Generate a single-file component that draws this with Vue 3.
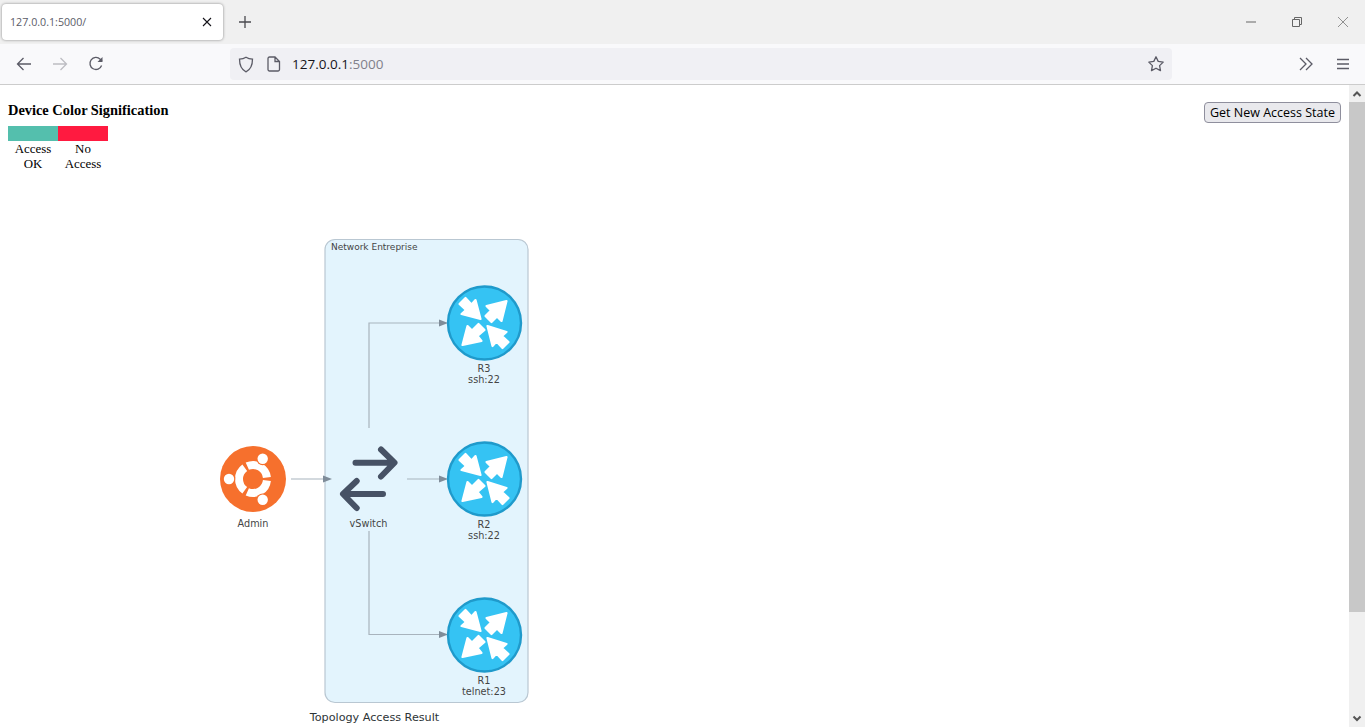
<template>
  <div class="browser">
    <div class="tabbar">
      <div class="tab">
        <span class="tab-title">127.0.0.1:5000/</span>
        <svg class="ico tab-close" width="12" height="12" viewBox="0 0 12 12">
          <path d="M2 2l8 8M10 2l-8 8" stroke="#15141a" stroke-width="1.1" fill="none" />
        </svg>
      </div>
      <svg class="ico new-tab" width="14" height="14" viewBox="0 0 14 14">
        <path d="M7 1v12M1 7h12" stroke="#4a4a4f" stroke-width="1.3" fill="none" />
      </svg>
      <div class="win-controls">
        <svg width="12" height="12" viewBox="0 0 12 12">
          <path d="M1 6h10" stroke="#666" stroke-width="1" fill="none" />
        </svg>
        <svg width="12" height="12" viewBox="0 0 12 12">
          <path d="M1.500 3.500h7v7h-7zM3.500 3.500v-2h7v7h-2" stroke="#666" stroke-width="1" fill="none" />
        </svg>
        <svg width="12" height="12" viewBox="0 0 12 12">
          <path d="M1 1l10 10M11 1L1 11" stroke="#777" stroke-width="0.8" fill="none" />
        </svg>
      </div>
    </div>

    <div class="toolbar">
      <div class="nav-btns">
        <svg width="16" height="16" viewBox="0 0 16 16">
          <path d="M15 8H1.500M7.500 2L1.500 8l6 6" stroke="#5b5b66" stroke-width="1.300" fill="none" />
        </svg>
        <svg width="16" height="16" viewBox="0 0 16 16">
          <path d="M1 8h13.500M8.500 2l6 6-6 6" stroke="#bdbdc2" stroke-width="1.300" fill="none" />
        </svg>
        <svg width="16" height="16" viewBox="0 0 16 16">
          <path d="M13.600 9.500A6 6 0 1 1 12.200 3.200L14 5" stroke="#5b5b66" stroke-width="1.300" fill="none" />
          <path d="M14.500 1v5h-5z" fill="#5b5b66" />
        </svg>
      </div>
      <div class="urlbar">
        <svg class="shield" width="16" height="17" viewBox="0 0 16 17">
          <path d="M8 1.200c2 1.300 4 1.800 6.500 1.900 0 6.500-1.500 10.500-6.500 12.700C3 13.600 1.500 9.600 1.500 3.100 4 3 6 2.500 8 1.200z" stroke="#5b5b66" stroke-width="1.300" fill="none" />
        </svg>
        <svg class="page-ico" width="14" height="16" viewBox="0 0 14 16">
          <path d="M2.500 1h5.500l4.500 4.500v8a1.500 1.500 0 0 1-1.500 1.500H2.500A1.500 1.500 0 0 1 1 13.500v-11A1.500 1.500 0 0 1 2.500 1zM8 1v4.500h4.500" stroke="#5b5b66" stroke-width="1.300" fill="none" />
        </svg>
        <span class="url">127.0.0.1<span class="url-port">:5000</span></span>
        <svg class="star" width="18" height="18" viewBox="0 0 18 18">
          <path d="M9 1.800l2.200 4.600 5 .7-3.600 3.500.9 5L9 13.200l-4.500 2.400.9-5L1.800 7.100l5-.7z" stroke="#5b5b66" stroke-width="1.300" stroke-linejoin="round" fill="none" />
        </svg>
      </div>
      <div class="tool-end">
        <svg width="14" height="14" viewBox="0 0 14 14">
          <path d="M1 1l6 6-6 6M7 1l6 6-6 6" stroke="#5b5b66" stroke-width="1.300" fill="none" />
        </svg>
        <svg width="14" height="14" viewBox="0 0 14 14">
          <path d="M1 2.500h12M1 7h12M1 11.500h12" stroke="#5b5b66" stroke-width="1.300" fill="none" />
        </svg>
      </div>
    </div>

    <div class="viewport">
      <div class="page">
        <div class="page-head">
          <div class="legend">
            <div class="legend-title">Device Color Signification</div>
            <div class="legend-row">
              <div v-for="item in legend" :key="item.label" class="legend-item">
                <div class="swatch" :style="{ background: item.color }"></div>
                <div class="legend-label">{{ item.label }}</div>
              </div>
            </div>
          </div>
          <button class="refresh">Get New Access State</button>
        </div>

        <svg class="topology" width="340" height="497" viewBox="200 230 340 497">
          <defs>
            <g id="router">
              <circle r="36.500" fill="#35c3f3" stroke="#1f9acb" stroke-width="2.400" />
              <g fill="#fff" stroke="#fff" stroke-width="2.200" stroke-linejoin="round">
                <path d="M-4 -4L-9 -23L-13 -18.500L-19 -25L-25 -19L-18.500 -13L-23 -9z" />
                <path d="M22 -22L17 -2L12.500 -6.500L7 -1L1 -7L6.500 -12.500L2 -17z" />
                <path d="M-22 22L-17 3L-12.500 7.500L-6 1L0 7L-7 13L-3 18z" />
                <path d="M3 3L22 9L17.500 13L24 19L18 25L12 18.500L8 23z" />
              </g>
            </g>
            <path id="head" d="M0 0l-9 -3.500v7z" fill="#7f8c99" />
          </defs>

          <rect x="325" y="239.500" width="203" height="463" rx="10" class="cluster" />
          <text x="331" y="249.500" class="lbl cluster-lbl">Network Entreprise</text>

          <path d="M291 479H325M407 479H440M369 428V323H440M369 531V634.500H440" class="edge" />
          <use href="#head" x="332" y="479" />
          <use href="#head" x="448" y="479" />
          <use href="#head" x="448" y="323" />
          <use href="#head" x="448" y="634.500" />

          <!-- ubuntu -->
          <circle cx="253" cy="479" r="33" fill="#f6702d" />
          <g fill="none" stroke="#fff" stroke-width="8">
            <path d="M247.310 466.210A14 14 0 0 1 266.920 477.540" />
            <path d="M266.920 480.460A14 14 0 0 1 247.310 491.790" />
            <path d="M244.770 490.330A14 14 0 0 1 244.770 467.670" />
          </g>
          <g fill="#f6702d">
            <circle cx="262.700" cy="458.800" r="6.400" />
            <circle cx="262.700" cy="499.800" r="6.400" />
            <circle cx="229" cy="479" r="6.400" />
          </g>
          <g fill="#fff">
            <circle cx="262.700" cy="458.800" r="5.200" />
            <circle cx="262.700" cy="499.800" r="5.200" />
            <circle cx="229" cy="479" r="5.200" />
          </g>
          <text x="253" y="527" class="lbl mid">Admin</text>

          <!-- vswitch -->
          <g fill="none" stroke="#475265" stroke-width="6" stroke-linecap="round" stroke-linejoin="round">
            <path d="M355.500 462.700H394M381 449.500L394.500 462.700L381 476.500" />
            <path d="M383 494H343.500M356.700 481L343 494L356.700 508" />
          </g>
          <text x="368.500" y="527" class="lbl mid">vSwitch</text>

          <use v-for="r in routers" :key="r.name" href="#router" x="484.500" :y="r.y" />
          <template v-for="r in routers" :key="r.name + 't'">
            <text x="484" :y="r.y + 49" class="lbl mid">{{ r.name }}</text>
            <text x="484" :y="r.y + 60" class="lbl mid">{{ r.port }}</text>
          </template>

          <text x="374.500" y="721" class="caption mid">Topology Access Result</text>
        </svg>
      </div>

      <div class="scrollbar">
        <svg width="16" height="17" viewBox="0 0 16 17">
          <path d="M4.500 11L8 7.500l3.500 3.500" stroke="#555" stroke-width="2" fill="none" />
        </svg>
        <div class="thumb"></div>
        <div class="track"></div>
        <svg width="16" height="17" viewBox="0 0 16 17">
          <path d="M4.500 6.500L8 10l3.500-3.500" stroke="#555" stroke-width="2" fill="none" />
        </svg>
      </div>
    </div>
  </div>
</template>

<script setup>
const legend = [
  { label: 'Access OK', color: '#54bfad' },
  { label: 'No Access', color: '#ff1a40' }
];

const routers = [
  { name: 'R3', port: 'ssh:22', y: 323 },
  { name: 'R2', port: 'ssh:22', y: 479 },
  { name: 'R1', port: 'telnet:23', y: 635 }
];
</script>

<style scoped>
.browser {
  display: flex;
  flex-direction: column;
  height: 727px;
  overflow: hidden;
  background: #fff;
}

.tabbar {
  display: flex;
  align-items: center;
  height: 44px;
  flex: none;
  background: #f0f0f0;
}

.tab {
  display: flex;
  align-items: center;
  justify-content: space-between;
  align-self: flex-start;
  box-sizing: border-box;
  width: 221px;
  height: 36px;
  margin: 4px 0 0 2px;
  padding: 0 10px 0 8px;
  background: #fff;
  border-radius: 4px;
  box-shadow: 0 0 3px rgba(0, 0, 0, 0.45);
}

.tab-title {
  font: 10.700px "Open Sans", sans-serif;
  color: #5b5b66;
}

.new-tab {
  margin-left: 15px;
}

.win-controls {
  display: flex;
  gap: 34px;
  margin-left: auto;
  margin-right: 16px;
}

.toolbar {
  display: flex;
  align-items: center;
  height: 41px;
  flex: none;
  box-sizing: border-box;
  background: #f9f9fb;
  border-bottom: 1px solid #ccc;
}

.nav-btns {
  display: flex;
  gap: 20px;
  width: 230px;
  padding-left: 16px;
  box-sizing: border-box;
}

.urlbar {
  display: flex;
  align-items: center;
  width: 942px;
  height: 32px;
  background: #f0f0f4;
  border-radius: 4px;
}

.shield {
  margin-left: 8px;
}

.page-ico {
  margin-left: 13px;
}

.url {
  margin-left: 11px;
  font: 13.500px "Open Sans", sans-serif;
  color: #15141a;
}

.url-port {
  color: #80808a;
}

.star {
  margin-left: auto;
  margin-right: 7px;
}

.tool-end {
  display: flex;
  gap: 23px;
  margin-left: 127px;
}

.viewport {
  flex: 1;
  display: flex;
  min-height: 0;
}

.page {
  flex: 1;
  min-width: 0;
}

.page-head {
  display: flex;
  justify-content: space-between;
  align-items: flex-start;
  padding: 17px 8px 0 8px;
}

.legend-title {
  font: bold 14.400px "Liberation Serif", serif;
  line-height: 17px;
  margin-bottom: 7px;
  color: #000;
}

.legend-row {
  display: flex;
}

.legend-item {
  width: 50px;
  text-align: center;
}

.swatch {
  height: 15px;
}

.legend-label {
  padding: 1px 5px 0;
  font: 12.900px/15px "Liberation Serif", serif;
  color: #000;
}

.refresh {
  box-sizing: border-box;
  height: 21px;
  width: 137px;
  padding: 0;
  font: 12.500px "Open Sans", sans-serif;
  color: #000;
  background: #e9e9ed;
  border: 1px solid #8f8f9d;
  border-radius: 4px;
}

.topology {
  display: block;
  margin-top: 58px;
  margin-left: 200px;
}

.cluster {
  fill: #e3f4fd;
  stroke: #b9c7d2;
  stroke-width: 1.200;
}

.edge {
  fill: none;
  stroke: #a8b3bd;
  stroke-width: 1.200;
}

.lbl {
  font: 9.700px "DejaVu Sans", sans-serif;
  fill: #444;
}

.cluster-lbl {
  font-size: 9px;
}

.mid {
  text-anchor: middle;
}

.caption {
  font: 11.200px "DejaVu Sans", sans-serif;
  fill: #2d3436;
}

.scrollbar {
  display: flex;
  flex-direction: column;
  flex: none;
  width: 16px;
  background: #f0f0f0;
}

.thumb {
  height: 510px;
  background: #c8c8c8;
}

.track {
  flex: 1;
}
</style>
